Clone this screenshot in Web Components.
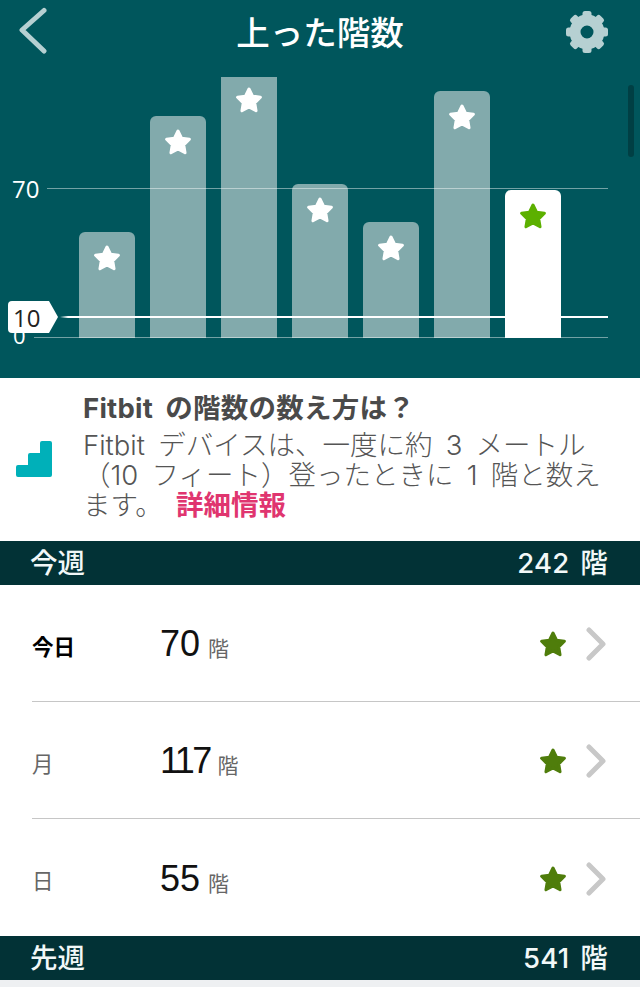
<!DOCTYPE html>
<html lang="ja">
<head>
<meta charset="utf-8">
<title>上った階数</title>
<style>
  html, body { margin: 0; height: 996px; overflow: hidden; background: #fff; }
  body { font-family: Inter, "Noto Sans CJK JP", "Noto Sans", sans-serif; }
</style>
</head>
<body>
<fb-screen>
  <fb-chart-panel title-text="上った階数">
    <fb-bar height="106"></fb-bar>
    <fb-bar height="222"></fb-bar>
    <fb-bar height="261" clipped></fb-bar>
    <fb-bar height="154"></fb-bar>
    <fb-bar height="116"></fb-bar>
    <fb-bar height="247"></fb-bar>
    <fb-bar height="148" today></fb-bar>
  </fb-chart-panel>
  <fb-info>
    <span slot="title">Fitbit の階数の数え方は？</span>
    Fitbit デバイスは、一度に約 3 メートル<br>（10 フィート）登ったときに 1 階と数え<br>ます。 <a>詳細情報</a>
  </fb-info>
  <fb-section label="今週" total="242 階"></fb-section>
  <fb-row day="今日" value="70" today></fb-row>
  <fb-row day="月" value="117" tight></fb-row>
  <fb-row day="日" value="55" last></fb-row>
  <fb-section label="先週" total="541 階"></fb-section>
</fb-screen>

<script>
// star shared by the bars and the rows
const STAR = `<svg viewBox="0 0 28 28" width="28" height="28" style="display:block">
  <polygon fill="currentColor" stroke="currentColor" stroke-width="3" stroke-linejoin="round"
    points="14,3 17.53,10.15 25.41,11.29 19.71,16.85 21.05,24.71 14,21 6.95,24.71 8.29,16.85 2.59,11.29 10.47,10.15"/>
</svg>`;

function gearTeeth() {
    let out = '';
    for (let i = 0; i < 8; i++) {
        out += `<rect x="16.5" y="0" width="9" height="10" rx="2.5" fill="#b6d0d2" transform="rotate(${i * 45} 21 21)"/>`;
    }
    return out;
}

class FbScreen extends HTMLElement {
    constructor() {
        super();
        this.attachShadow({mode: 'open'});
        this.shadowRoot.innerHTML = `
            <style>
                :host { display: block; width: 640px; height: 996px; overflow: hidden; background: #fff; }
                #foot { height: 7px; background: #eef0f2; }
            </style>
            <slot></slot>
            <div id="foot"></div>
        `;
    }
}

class FbChartPanel extends HTMLElement {
    constructor() {
        super();
        this.attachShadow({mode: 'open'});
        this.shadowRoot.innerHTML = `
            <style>
                :host { display: block; position: relative; height: 378px; background: #00565c; color: #fff; }
                header { height: 77px; display: grid; grid-template-columns: 1fr auto 1fr; align-items: start; }
                h1 { margin: 8px 0 0; font-size: 33.5px; line-height: 50px; font-weight: 500; }
                .back { margin: 7px 0 0 16px; }
                .gear { margin: 11px 32px 0 0; justify-self: end; }
                #plot { position: relative; height: 261px; margin-bottom: 40px; overflow: visible; }
                #bars { display: flex; align-items: flex-end; gap: 15px; height: 261px; padding-left: 79px; overflow: hidden; }
                .line { position: absolute; left: 47px; width: 561px; height: 1px; background: rgba(255,255,255,.45); }
                #l70 { top: 111px; }
                #l0 { top: 260px; left: 34px; width: 574px; }
                #goal { position: absolute; top: 239px; left: 60px; width: 548px; height: 2px;
                        background: linear-gradient(90deg, rgba(255,255,255,0), #fff 8px); }
                .lbl { position: absolute; font-family: "Open Sans", sans-serif; font-size: 24px; line-height: 30px; }
                #t70 { left: 12px; top: 97px; }
                #t0 { left: 13px; top: 245px; font-size: 22px; line-height: 26px; }
                #tag { position: absolute; left: 8px; top: 224px; width: 50px; height: 32px; }
                #tag svg { position: absolute; inset: 0; }
                #tag span { position: absolute; left: 5px; top: 0; font-family: "Open Sans", sans-serif;
                            font-size: 24px; line-height: 33px; color: #222; }
                #scroll { position: absolute; left: 628px; top: 85px; width: 6px; height: 72px;
                          border-radius: 3px; background: #003f44; }
            </style>
            <header>
                <svg class="back" width="34" height="50" viewBox="0 0 34 50">
                    <polyline points="28,3.5 6,23 28,44" fill="none" stroke="#b6d0d2" stroke-width="5"
                        stroke-linecap="round" stroke-linejoin="round"/>
                </svg>
                <h1></h1>
                <svg class="gear" width="42" height="42" viewBox="0 0 42 42">
                    ${gearTeeth()}
                    <circle cx="21" cy="21" r="12" fill="none" stroke="#b6d0d2" stroke-width="11"/>
                </svg>
            </header>
            <div id="plot">
                <div id="bars"><slot></slot></div>
                <div class="line" id="l70"></div>
                <div class="line" id="l0"></div>
                <span class="lbl" id="t70">70</span>
                <span class="lbl" id="t0">0</span>
                <div id="goal"></div>
                <div id="tag">
                    <svg width="50" height="32" viewBox="0 0 50 32">
                        <path d="M4 0H41L50 16L41 32H4A4 4 0 0 1 0 28V4A4 4 0 0 1 4 0Z" fill="#fff"/>
                    </svg>
                    <span>10</span>
                </div>
            </div>
            <div id="scroll"></div>
        `;
        this.shadowRoot.querySelector('h1').textContent = this.getAttribute('title-text');
    }
}

class FbBar extends HTMLElement {
    constructor() {
        super();
        this.attachShadow({mode: 'open'});
        this.shadowRoot.innerHTML = `
            <style>
                :host { display: flex; justify-content: center; flex: none; width: 56px; box-sizing: border-box;
                        padding-top: 12px; background: #82aaac; color: #fff; border-radius: 6px 6px 0 0; }
                :host([clipped]) { border-radius: 0; padding-top: 9px; }
                :host([today]) { background: #fff; color: #5cb000; }
            </style>
            ${STAR}
        `;
        this.style.height = this.getAttribute('height') + 'px';
    }
}

class FbInfo extends HTMLElement {
    constructor() {
        super();
        this.attachShadow({mode: 'open'});
        this.shadowRoot.innerHTML = `
            <style>
                :host { display: flex; height: 163px; box-sizing: border-box; background: #fff; color: #555; }
                svg { flex: none; margin: 63px 31px 0 16px; }
                #text { font-size: 27.5px; line-height: 30px; padding-top: 14px; white-space: nowrap; font-weight: 300; word-spacing: 5.5px; }
                #title { display: block; color: #4a4a4a; font-weight: 700; line-height: 32px; margin-bottom: 6px; }
                ::slotted([slot=title]) { letter-spacing: .25px; }
                ::slotted(a) { color: #e0356f; font-weight: 700; }
            </style>
            <svg width="36" height="36" viewBox="0 0 36 36">
                <path d="M26 0H34A2 2 0 0 1 36 2V34A2 2 0 0 1 34 36H2A2 2 0 0 1 0 34V26A2 2 0 0 1 2 24H12V14A2 2 0 0 1 14 12H24V2A2 2 0 0 1 26 0Z" fill="#00b0b9"/>
            </svg>
            <div id="text">
                <div id="title"><slot name="title"></slot></div>
                <slot></slot>
            </div>
        `;
    }
}

class FbSection extends HTMLElement {
    constructor() {
        super();
        this.attachShadow({mode: 'open'});
        this.shadowRoot.innerHTML = `
            <style>
                :host { display: flex; justify-content: space-between; align-items: center; height: 44px;
                        box-sizing: border-box; padding: 1px 32px 0 30px; background: #023236; color: #f2f8f8;
                        font-size: 27.5px; font-weight: 500; line-height: 43px; }
                #total { word-spacing: 3px; letter-spacing: .3px; }
            </style>
            <span>${this.getAttribute('label')}</span>
            <span id="total">${this.getAttribute('total')}</span>
        `;
    }
}

class FbRow extends HTMLElement {
    constructor() {
        super();
        this.attachShadow({mode: 'open'});
        this.shadowRoot.innerHTML = `
            <style>
                :host { display: flex; align-items: center; height: 117px; box-sizing: border-box; margin-left: 32px;
                        padding-top: 2px; border-bottom: 1px solid #c6c6c6; color: #666; }
                :host([last]) { border-bottom: 0; }
                #day { width: 128px; font-size: 21.5px; margin-top: 2px; }
                :host([today]) #day { color: #000; font-weight: 700; }
                #val { flex: 1; display: flex; align-items: baseline; gap: 8px; font-size: 21px; }
                b { font-family: "Liberation Sans", sans-serif; font-weight: 400; font-size: 36px; color: #111; }
                :host([tight]) b { letter-spacing: -2.6px; }
                #star { color: #4f7d0b; margin-right: 19px; }
                svg.chev { margin-right: 33px; display: block; }
            </style>
            <span id="day">${this.getAttribute('day')}</span>
            <span id="val"><b>${this.getAttribute('value')}</b>階</span>
            <span id="star">${STAR}</span>
            <svg class="chev" width="21" height="34" viewBox="0 0 21 34">
                <polyline points="3,3 17,17 3,31" fill="none" stroke="#c8c8c8" stroke-width="5" stroke-linecap="round" stroke-linejoin="round"/>
            </svg>
        `;
    }
}

customElements.define('fb-screen', FbScreen);
customElements.define('fb-chart-panel', FbChartPanel);
customElements.define('fb-bar', FbBar);
customElements.define('fb-info', FbInfo);
customElements.define('fb-section', FbSection);
customElements.define('fb-row', FbRow);
</script>
</body>
</html>
